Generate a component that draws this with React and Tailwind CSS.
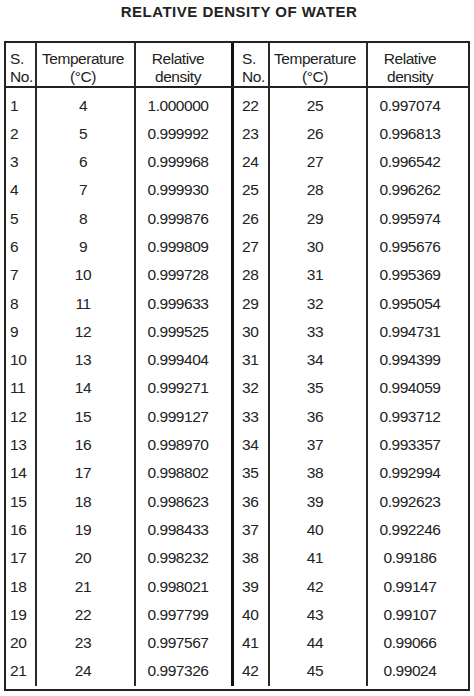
const left = [
  [1, 4, "1.000000"],
  [2, 5, "0.999992"],
  [3, 6, "0.999968"],
  [4, 7, "0.999930"],
  [5, 8, "0.999876"],
  [6, 9, "0.999809"],
  [7, 10, "0.999728"],
  [8, 11, "0.999633"],
  [9, 12, "0.999525"],
  [10, 13, "0.999404"],
  [11, 14, "0.999271"],
  [12, 15, "0.999127"],
  [13, 16, "0.998970"],
  [14, 17, "0.998802"],
  [15, 18, "0.998623"],
  [16, 19, "0.998433"],
  [17, 20, "0.998232"],
  [18, 21, "0.998021"],
  [19, 22, "0.997799"],
  [20, 23, "0.997567"],
  [21, 24, "0.997326"],
];

const right = [
  [22, 25, "0.997074"],
  [23, 26, "0.996813"],
  [24, 27, "0.996542"],
  [25, 28, "0.996262"],
  [26, 29, "0.995974"],
  [27, 30, "0.995676"],
  [28, 31, "0.995369"],
  [29, 32, "0.995054"],
  [30, 33, "0.994731"],
  [31, 34, "0.994399"],
  [32, 35, "0.994059"],
  [33, 36, "0.993712"],
  [34, 37, "0.993357"],
  [35, 38, "0.992994"],
  [36, 39, "0.992623"],
  [37, 40, "0.992246"],
  [38, 41, "0.99186"],
  [39, 42, "0.99147"],
  [40, 43, "0.99107"],
  [41, 44, "0.99066"],
  [42, 45, "0.99024"],
];

function Header({ first }) {
  return (
    <>
      <div className={`border-r-2 border-[#2a2a2a] pt-[7px] leading-[18px] ${first ? "pl-[4px]" : "pl-[8px]"}`}>
        S.
        <br />
        No.
      </div>
      <div className={`border-r-2 border-[#2a2a2a] pt-[7px] leading-[18px] text-center ${first ? "pr-[5px]" : "pr-[6px]"}`}>
        Temperature
        <br />
        (°C)
      </div>
      <div
        className={`pt-[7px] leading-[18px] text-center ${
          first ? "border-r-[3px] border-[#111] pr-[11px]" : "pr-[16px]"
        }`}
      >
        Relative
        <br />
        density
      </div>
    </>
  );
}

function Column({ rows, first }) {
  return (
    <>
      <div className={`border-r-2 border-[#2a2a2a] pt-[3.5px] ${first ? "pl-[4px]" : "pl-[8px]"}`}>
        {rows.map((r) => (
          <div key={r[0]} className="h-[28.3px] leading-[28.3px]">
            {r[0]}
          </div>
        ))}
      </div>
      <div className={`border-r-2 border-[#2a2a2a] pt-[3.5px] text-center ${first ? "pr-[5px]" : "pr-[6px]"}`}>
        {rows.map((r) => (
          <div key={r[0]} className="h-[28.3px] leading-[28.3px]">
            {r[1]}
          </div>
        ))}
      </div>
      <div
        className={`pt-[3.5px] text-center ${
          first ? "border-r-[3px] border-[#111] pr-[11px]" : "pr-[16px]"
        }`}
      >
        {rows.map((r) => (
          <div key={r[0]} className="h-[28.3px] leading-[28.3px]">
            {r[2]}
          </div>
        ))}
      </div>
    </>
  );
}

export default function App() {
  return (
    <div className="w-[474px] h-[696px] bg-white text-[#222] font-['Liberation_Sans',Arial,sans-serif]">
      <div className="pt-[2px] text-center text-[15px] leading-[20px] font-bold tracking-[0.5px] pl-[4px]">
        RELATIVE DENSITY OF WATER
      </div>

      <div className="ml-[4px] mt-[19px] w-[466px] border-2 border-[#222] text-[15.5px] tracking-[-0.45px]">
        <div className="grid grid-cols-[31px_99px_98px_36px_98px_100px] h-[45px] border-b-2 border-[#222]">
          <Header first />
          <Header />
        </div>

        <div className="grid grid-cols-[31px_99px_98px_36px_98px_100px] pb-[3px]">
          <Column rows={left} first />
          <Column rows={right} />
        </div>
      </div>
    </div>
  );
}
